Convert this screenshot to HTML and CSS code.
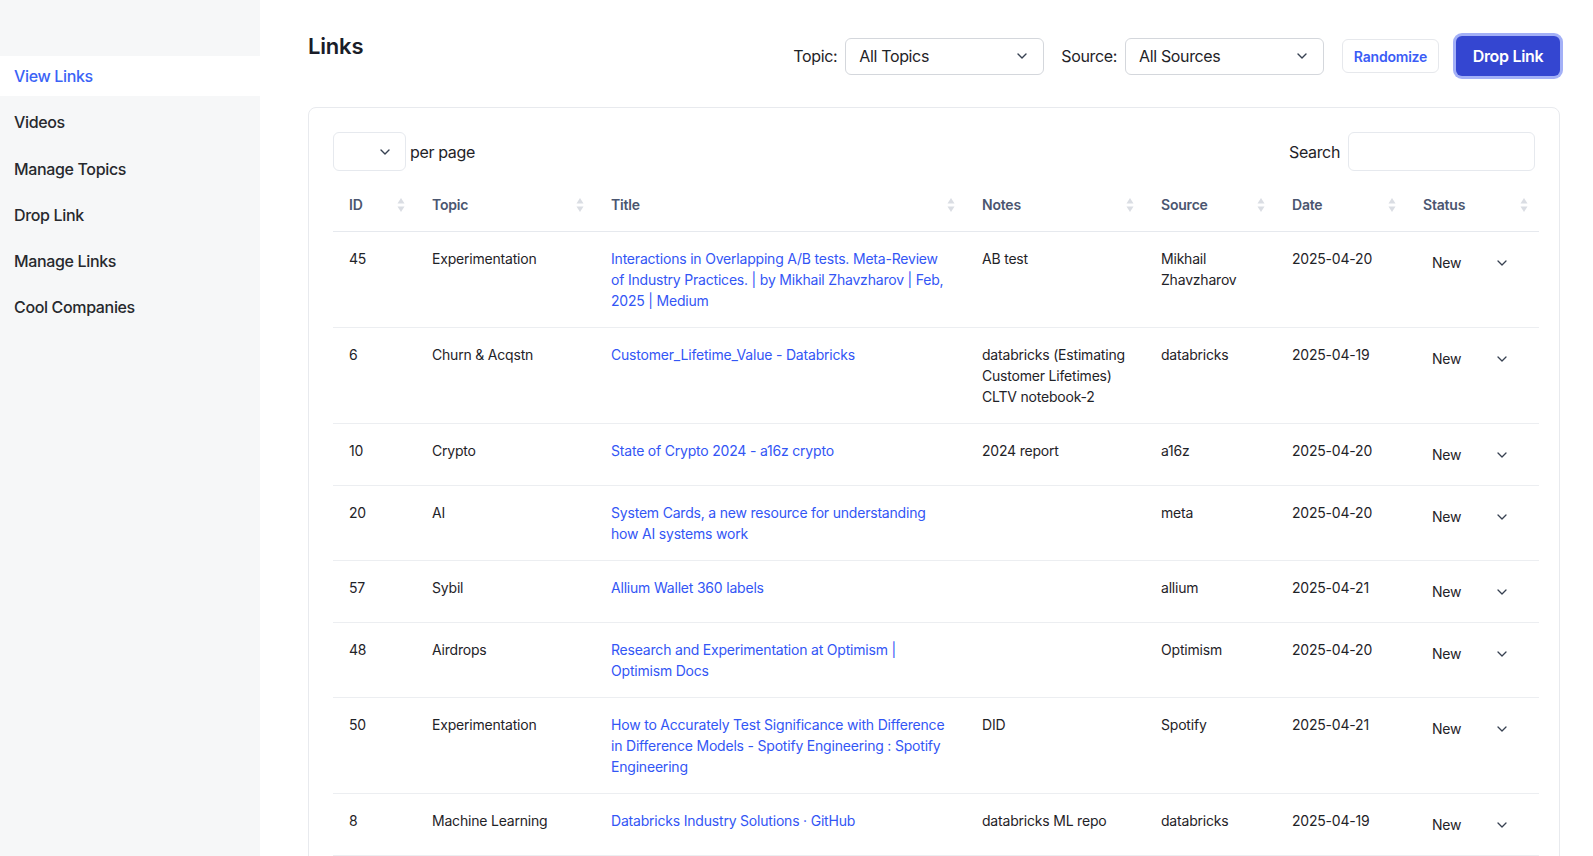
FILE: index.html
```html
<!DOCTYPE html>
<html lang="en">
<head>
<meta charset="utf-8">
<title>Links</title>
<link rel="stylesheet" href="styles.css">
</head>
<body>
<aside class="sidebar">
  <nav class="nav">
    <a class="nav-item active">View Links</a>
    <a class="nav-item">Videos</a>
    <a class="nav-item">Manage Topics</a>
    <a class="nav-item">Drop Link</a>
    <a class="nav-item">Manage Links</a>
    <a class="nav-item">Cool Companies</a>
  </nav>
</aside>
<main class="main">
  <header class="page-header">
    <h1 class="page-title">Links</h1>
    <div class="controls">
      <label class="ctl-label">Topic:</label>
      <div class="select wide"><span>All Topics</span><svg class="chev" width="10" height="6" viewBox="0 0 10 6"><polyline points="1,1 5,5 9,1" fill="none" stroke="#374151" stroke-width="1.4" stroke-linecap="round" stroke-linejoin="round"/></svg></div>
      <label class="ctl-label gap">Source:</label>
      <div class="select wide"><span>All Sources</span><svg class="chev" width="10" height="6" viewBox="0 0 10 6"><polyline points="1,1 5,5 9,1" fill="none" stroke="#374151" stroke-width="1.4" stroke-linecap="round" stroke-linejoin="round"/></svg></div>
      <button class="btn-outline">Randomize</button>
      <button class="btn-primary">Drop Link</button>
    </div>
  </header>

  <section class="card">
    <div class="card-top">
      <div class="perpage">
        <div class="select small"><span></span><svg class="chev" width="10" height="6" viewBox="0 0 10 6"><polyline points="1,1 5,5 9,1" fill="none" stroke="#374151" stroke-width="1.4" stroke-linecap="round" stroke-linejoin="round"/></svg></div>
        <span class="pp-label">per page</span>
      </div>
      <div class="search">
        <span class="search-label">Search</span>
        <div class="search-input"></div>
      </div>
    </div>

    <table class="tbl">
      <colgroup>
        <col style="width:83px"><col style="width:179px"><col style="width:371px"><col style="width:179px"><col style="width:131px"><col style="width:131px"><col style="width:132px">
      </colgroup>
      <thead>
        <tr>
          <th><div class="th-in"><span>ID</span><svg class="sort" width="8" height="14" viewBox="0 0 8 14"><polygon points="4,0 7.5,5.5 0.5,5.5"/><polygon points="0.5,8.5 7.5,8.5 4,14"/></svg></div></th>
          <th><div class="th-in"><span>Topic</span><svg class="sort" width="8" height="14" viewBox="0 0 8 14"><polygon points="4,0 7.5,5.5 0.5,5.5"/><polygon points="0.5,8.5 7.5,8.5 4,14"/></svg></div></th>
          <th><div class="th-in"><span>Title</span><svg class="sort" width="8" height="14" viewBox="0 0 8 14"><polygon points="4,0 7.5,5.5 0.5,5.5"/><polygon points="0.5,8.5 7.5,8.5 4,14"/></svg></div></th>
          <th><div class="th-in"><span>Notes</span><svg class="sort" width="8" height="14" viewBox="0 0 8 14"><polygon points="4,0 7.5,5.5 0.5,5.5"/><polygon points="0.5,8.5 7.5,8.5 4,14"/></svg></div></th>
          <th><div class="th-in"><span>Source</span><svg class="sort" width="8" height="14" viewBox="0 0 8 14"><polygon points="4,0 7.5,5.5 0.5,5.5"/><polygon points="0.5,8.5 7.5,8.5 4,14"/></svg></div></th>
          <th><div class="th-in"><span>Date</span><svg class="sort" width="8" height="14" viewBox="0 0 8 14"><polygon points="4,0 7.5,5.5 0.5,5.5"/><polygon points="0.5,8.5 7.5,8.5 4,14"/></svg></div></th>
          <th><div class="th-in"><span>Status</span><svg class="sort" width="8" height="14" viewBox="0 0 8 14"><polygon points="4,0 7.5,5.5 0.5,5.5"/><polygon points="0.5,8.5 7.5,8.5 4,14"/></svg></div></th>
        </tr>
      </thead>
      <tbody>
        <tr>
          <td>45</td><td>Experimentation</td>
          <td><a class="lnk">Interactions in Overlapping A/B tests. Meta-Review of Industry Practices. | by Mikhail Zhavzharov | Feb, 2025 | Medium</a></td>
          <td>AB test</td><td>Mikhail Zhavzharov</td><td>2025-04-20</td>
          <td><div class="status"><span>New</span><svg width="10" height="6" viewBox="0 0 10 6"><polyline points="1,1 5,5 9,1" fill="none" stroke="#374151" stroke-width="1.3" stroke-linecap="round" stroke-linejoin="round"/></svg></div></td>
        </tr>
        <tr>
          <td>6</td><td>Churn &amp; Acqstn</td>
          <td><a class="lnk">Customer_Lifetime_Value - Databricks</a></td>
          <td>databricks (Estimating Customer Lifetimes) CLTV notebook-2</td><td>databricks</td><td>2025-04-19</td>
          <td><div class="status"><span>New</span><svg width="10" height="6" viewBox="0 0 10 6"><polyline points="1,1 5,5 9,1" fill="none" stroke="#374151" stroke-width="1.3" stroke-linecap="round" stroke-linejoin="round"/></svg></div></td>
        </tr>
        <tr>
          <td>10</td><td>Crypto</td>
          <td><a class="lnk">State of Crypto 2024 - a16z crypto</a></td>
          <td>2024 report</td><td>a16z</td><td>2025-04-20</td>
          <td><div class="status"><span>New</span><svg width="10" height="6" viewBox="0 0 10 6"><polyline points="1,1 5,5 9,1" fill="none" stroke="#374151" stroke-width="1.3" stroke-linecap="round" stroke-linejoin="round"/></svg></div></td>
        </tr>
        <tr>
          <td>20</td><td>AI</td>
          <td><a class="lnk">System Cards, a new resource for understanding how AI systems work</a></td>
          <td></td><td>meta</td><td>2025-04-20</td>
          <td><div class="status"><span>New</span><svg width="10" height="6" viewBox="0 0 10 6"><polyline points="1,1 5,5 9,1" fill="none" stroke="#374151" stroke-width="1.3" stroke-linecap="round" stroke-linejoin="round"/></svg></div></td>
        </tr>
        <tr>
          <td>57</td><td>Sybil</td>
          <td><a class="lnk">Allium Wallet 360 labels</a></td>
          <td></td><td>allium</td><td>2025-04-21</td>
          <td><div class="status"><span>New</span><svg width="10" height="6" viewBox="0 0 10 6"><polyline points="1,1 5,5 9,1" fill="none" stroke="#374151" stroke-width="1.3" stroke-linecap="round" stroke-linejoin="round"/></svg></div></td>
        </tr>
        <tr>
          <td>48</td><td>Airdrops</td>
          <td><a class="lnk">Research and Experimentation at Optimism | Optimism Docs</a></td>
          <td></td><td>Optimism</td><td>2025-04-20</td>
          <td><div class="status"><span>New</span><svg width="10" height="6" viewBox="0 0 10 6"><polyline points="1,1 5,5 9,1" fill="none" stroke="#374151" stroke-width="1.3" stroke-linecap="round" stroke-linejoin="round"/></svg></div></td>
        </tr>
        <tr>
          <td>50</td><td>Experimentation</td>
          <td><a class="lnk">How to Accurately Test Significance with Difference in Difference Models - Spotify Engineering : Spotify Engineering</a></td>
          <td>DID</td><td>Spotify</td><td>2025-04-21</td>
          <td><div class="status"><span>New</span><svg width="10" height="6" viewBox="0 0 10 6"><polyline points="1,1 5,5 9,1" fill="none" stroke="#374151" stroke-width="1.3" stroke-linecap="round" stroke-linejoin="round"/></svg></div></td>
        </tr>
        <tr>
          <td>8</td><td>Machine Learning</td>
          <td><a class="lnk">Databricks Industry Solutions · GitHub</a></td>
          <td>databricks ML repo</td><td>databricks</td><td>2025-04-19</td>
          <td><div class="status"><span>New</span><svg width="10" height="6" viewBox="0 0 10 6"><polyline points="1,1 5,5 9,1" fill="none" stroke="#374151" stroke-width="1.3" stroke-linecap="round" stroke-linejoin="round"/></svg></div></td>
        </tr>
      </tbody>
    </table>
  </section>
</main>
</body>
</html>
```

FILE: styles.css
```css
* { box-sizing: border-box; }

html, body {
  margin: 0;
  padding: 0;
}

body {
  display: flex;
  font-family: "Inter", "Noto Sans", sans-serif;
  color: #1f2328;
  background: #ffffff;
  min-height: 100vh;
  letter-spacing: -0.35px;
}

.sidebar {
  width: 260px;
  flex: 0 0 260px;
  background: #f6f7f8;
  padding-top: 56px;
}

.nav {
  display: flex;
  flex-direction: column;
  gap: 6.3px;
}

.nav-item {
  display: block;
  height: 40px;
  line-height: 40px;
  padding-left: 14px;
  font-size: 16px;
  font-weight: 500;
  color: #27292e;
}

.nav-item.active {
  background: #ffffff;
  color: #3b63f6;
}

.main {
  flex: 1;
  min-width: 0;
  padding: 28px 33px 0 48px;
}

.page-header {
  display: flex;
  justify-content: space-between;
  align-items: flex-start;
}

.page-title {
  margin: 2px 0 0 0;
  font-size: 22px;
  line-height: 32px;
  font-weight: 600;
  letter-spacing: -0.2px;
  color: #1a1d29;
}

.controls {
  display: flex;
  align-items: center;
  margin-top: 8px;
  height: 40px;
}

.ctl-label {
  font-size: 16px;
  color: #1f2328;
  margin-right: 8px;
}

.ctl-label.gap {
  margin-left: 17px;
}

.select {
  display: flex;
  align-items: center;
  justify-content: space-between;
  border: 1px solid #d4d7dc;
  border-radius: 6px;
  background: #fff;
  font-size: 16px;
  color: #1f2328;
}

.select.wide {
  width: 199px;
  height: 37px;
  padding: 0 16px 0 13px;
}

.select.small {
  width: 73px;
  height: 39px;
  padding: 0 15px 0 12px;
  border-color: #e6e9ee;
}

.btn-outline {
  margin-left: 18px;
  width: 97px;
  height: 34px;
  border: 1px solid #e6e8ec;
  border-radius: 6px;
  background: #fff;
  color: #3b5cf6;
  font-family: inherit;
  font-size: 14px;
  font-weight: 600;
  letter-spacing: -0.2px;
  padding: 0;
}

.btn-primary {
  margin-left: 17px;
  width: 104px;
  height: 40px;
  border: none;
  border-radius: 6px;
  background: #3446d1;
  color: #fff;
  font-family: inherit;
  font-size: 16px;
  font-weight: 600;
  letter-spacing: -0.3px;
  padding: 0;
  box-shadow: 0 0 0 3px #a3b0f7;
}

.card {
  margin-top: 31px;
  border: 1px solid #e8eaee;
  border-radius: 8px;
  padding: 24px 24px 24px 24px;
}

.card-top {
  display: flex;
  justify-content: space-between;
  align-items: center;
  height: 39px;
}

.perpage {
  display: flex;
  align-items: center;
}

.pp-label {
  margin-left: 4px;
  font-size: 16px;
  color: #1f2328;
}

.search {
  display: flex;
  align-items: center;
}

.search-label {
  font-size: 16px;
  color: #1f2328;
  margin-right: 8px;
}

.search-input {
  width: 187px;
  height: 39px;
  border: 1px solid #e6e9ee;
  border-radius: 6px;
}

.tbl {
  margin-top: 7px;
  width: calc(100% + 4px);
  table-layout: fixed;
  border-collapse: collapse;
  font-size: 14px;
  line-height: 21px;
  letter-spacing: -0.2px;
}

.tbl th {
  padding: 16px 11px 16px 16px;
  text-align: left;
  font-weight: 600;
  color: #4b5670;
  border-bottom: 1px solid #e6e9ee;
}

.th-in {
  display: flex;
  justify-content: space-between;
  align-items: center;
}

.sort {
  fill: #dadde3;
}

.tbl td {
  padding: 16px;
  vertical-align: top;
  color: #1f2328;
  border-bottom: 1px solid #eceef1;
}

.lnk {
  color: #3356f5;
  text-decoration: none;
}

.status {
  display: flex;
  align-items: center;
  justify-content: space-between;
  width: 90px;
  height: 29px;
  padding: 0 6px 0 9px;
  font-size: 14px;
  color: #1f2328;
}
```
